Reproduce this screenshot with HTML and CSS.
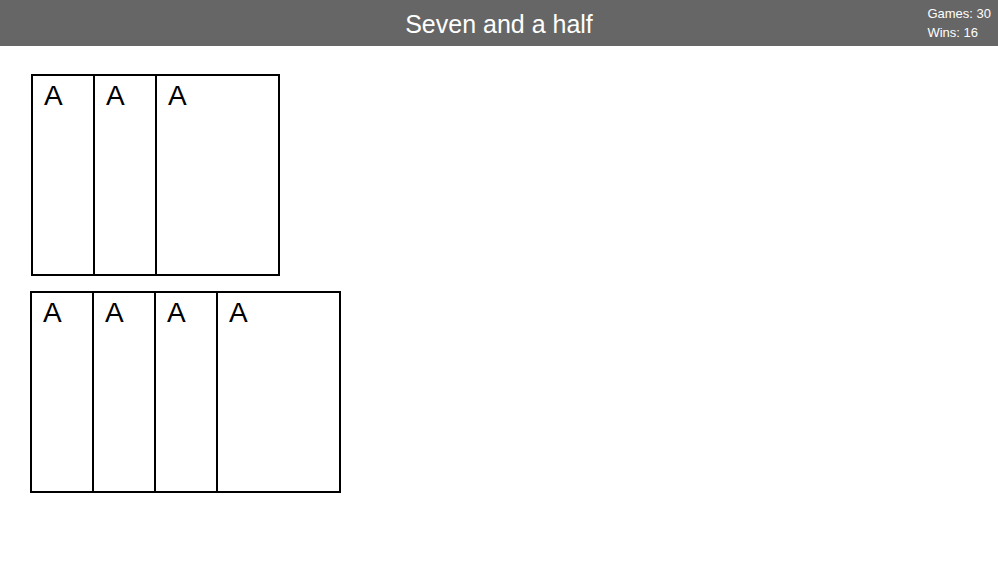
FILE: index.html
```html
<!DOCTYPE html>
<html lang="en">
<head>
<meta charset="utf-8">
<title>Seven and a half</title>
<link rel="stylesheet" href="styles.css">
</head>
<body>
<header class="topbar">
  <h1 class="title">Seven and a half</h1>
  <div class="stats">
    <p class="stat">Games: 30</p>
    <p class="stat">Wins: 16</p>
  </div>
</header>
<main class="table">
  <section class="hand hand-dealer" aria-label="Dealer">
    <div class="card">A</div>
    <div class="card">A</div>
    <div class="card">A</div>
  </section>
  <section class="hand" aria-label="Player">
    <div class="card">A</div>
    <div class="card">A</div>
    <div class="card">A</div>
    <div class="card">A</div>
  </section>
</main>
</body>
</html>
```

FILE: styles.css
```css
* {
  box-sizing: border-box;
}

body {
  margin: 0;
  background: #fff;
  color: #000;
  font-family: "Liberation Sans", Arial, sans-serif;
}

.topbar {
  display: grid;
  grid-template-columns: 1fr auto 1fr;
  align-items: center;
  padding: 4px 7px;
  background: #666;
  color: #fff;
}

.title {
  grid-column: 2;
  margin: 0;
  padding-top: 2px;
  font-size: 25px;
  font-weight: 400;
  line-height: 36px;
}

.stats {
  justify-self: end;
}

.stat {
  margin: 0;
  font-size: 13px;
  line-height: 19px;
}

.table {
  display: flex;
  flex-direction: column;
  gap: 15px;
  padding: 28px 30px;
}

.hand {
  display: flex;
}

.hand-dealer {
  padding-left: 1px;
}

.card {
  width: 125px;
  height: 202px;
  padding: 3px 11px;
  border: 2px solid #000;
  background: #fff;
  font-size: 28px;
  line-height: 34px;
}

.card + .card {
  margin-left: -63px;
}
```
